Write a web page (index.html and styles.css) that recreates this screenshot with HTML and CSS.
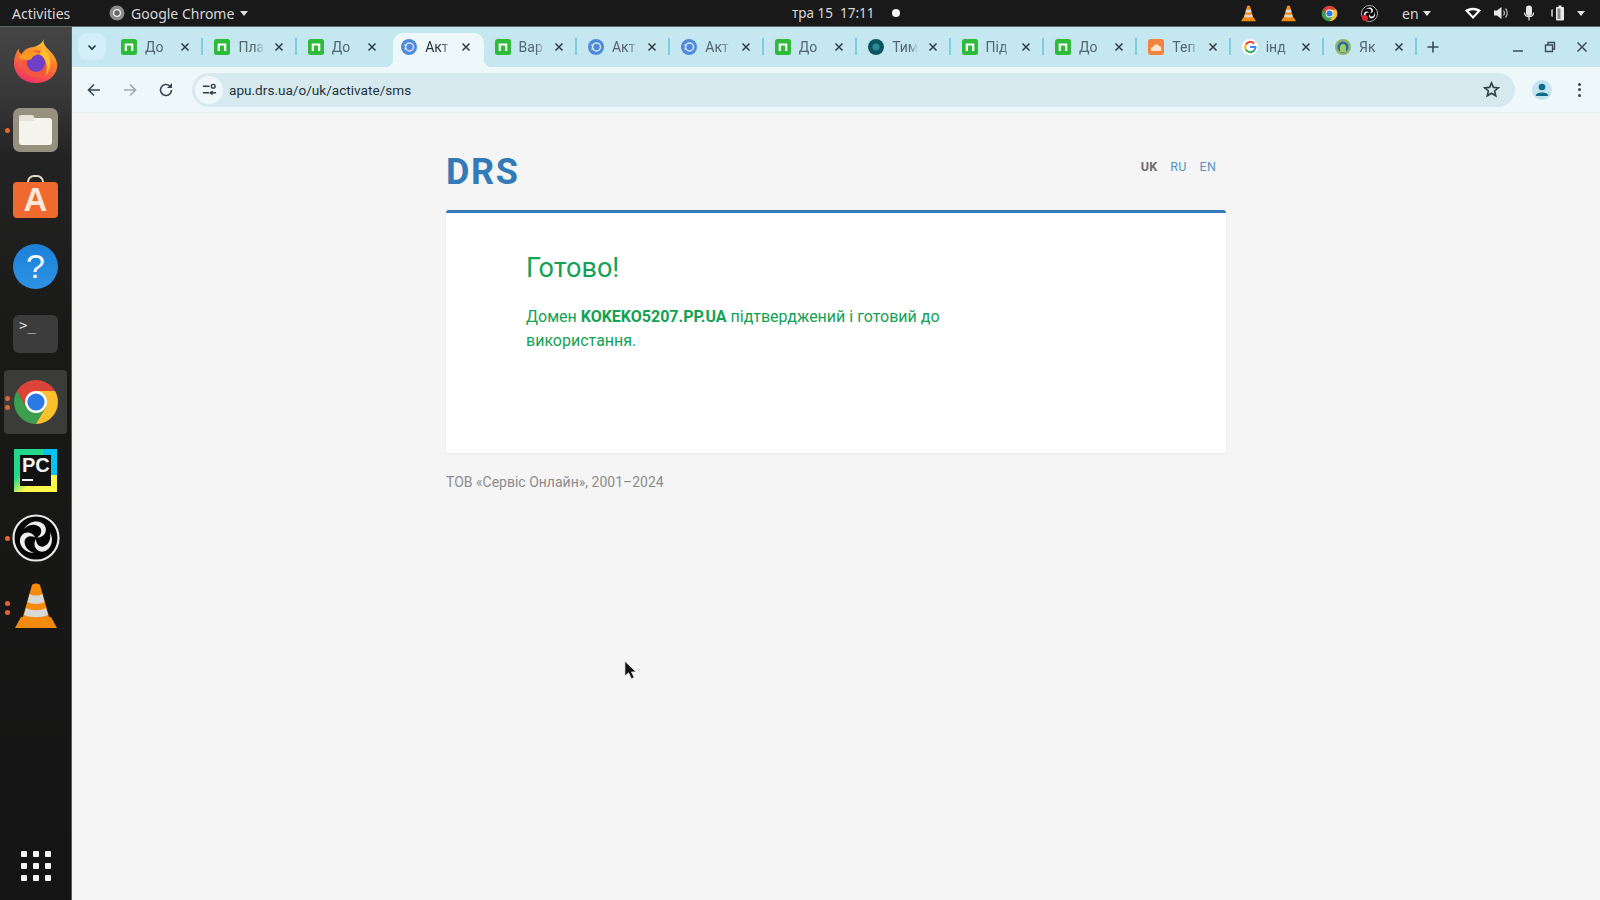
FILE: index.html
```html
<!DOCTYPE html>
<html lang="uk">
<head>
    <meta charset="UTF-8">
    <meta name="viewport" content="width=device-width, initial-scale=1.0">
    <title>DRS - Готово</title>
    <link rel="stylesheet" href="styles.css">
</head>
<body>
    <svg class="defs" width="0" height="0" aria-hidden="true">
        <symbol id="chrome" viewBox="0 0 48 48">
            <path fill="#db4437" d="M43 13H24L14.5 29.5 5 13A22 22 0 0 1 43 13Z"/>
            <path fill="#3c9f4f" d="M5 13 14.5 29.5H33.5L24 46A22 22 0 0 1 5 13Z"/>
            <path fill="#fbc02d" d="M43 13H24L33.5 29.5 24 46A22 22 0 0 0 43 13Z"/>
            <circle cx="24" cy="24" r="11" fill="#fff"/>
            <circle cx="24" cy="24" r="8.6" fill="#2a79e4"/>
        </symbol>
        <symbol id="cone" viewBox="0 0 48 48">
            <path fill="#f08a12" d="M3 46 9 35H39L45 46Z"/>
            <path fill="#f58a0b" d="M20 3C22 1 26 1 28 3L38 38C32 42 16 42 10 38Z"/>
            <path fill="#d8d8d8" d="M17.5 12C21 14 27 14 30.5 12L32.5 20C28 22.5 20 22.5 15.5 20Z"/>
            <path fill="#d8d8d8" d="M14 26C20 29 28 29 34 26L36 33C29 36 19 36 12 33Z"/>
        </symbol>
        <symbol id="obs" viewBox="0 0 48 48">
            <circle cx="24" cy="24" r="22.5" fill="#050505" stroke="#e8e8e8" stroke-width="2.2"/>
            <path fill="#eee" d="M12 15C17 6 29 5 33 12 36 18 31 24 25 23.500 29 21 30.500 17 28 13.500 24 9.500 17 10 12 15Z"/>
            <path fill="#eee" transform="rotate(120 24 24)" d="M12 15C17 6 29 5 33 12 36 18 31 24 25 23.500 29 21 30.500 17 28 13.500 24 9.500 17 10 12 15Z"/>
            <path fill="#eee" transform="rotate(240 24 24)" d="M12 15C17 6 29 5 33 12 36 18 31 24 25 23.500 29 21 30.500 17 28 13.500 24 9.500 17 10 12 15Z"/>
        </symbol>
        <symbol id="nfav" viewBox="0 0 16 16">
            <rect width="16" height="16" rx="2.5" fill="#2fbb3a"/>
            <path fill="none" stroke="#fff" stroke-width="2.2" d="M4.8 12V5.500H11.200V12"/>
        </symbol>
        <symbol id="sdfav" viewBox="0 0 16 16">
            <circle cx="8" cy="8" r="8" fill="#4f8ad9"/>
            <circle cx="8.5" cy="8" r="4" fill="none" stroke="#d7e6fa" stroke-width="1.5"/>
            <path fill="none" stroke="#d7e6fa" stroke-width="1.2" d="M3 6H6M3 10H6"/>
        </symbol>
        <symbol id="close" viewBox="0 0 10 10">
            <path fill="none" stroke="currentColor" stroke-width="1.5" d="M1.500 1.500 8.500 8.500M8.500 1.500 1.500 8.500"/>
        </symbol>
    </svg>

    <div class="desktop">
        <div class="topbar">
            <span class="activities">Activities</span>
            <span class="app-menu">
                <svg class="app-icon" viewBox="0 0 16 16"><circle cx="8" cy="8" r="7.500" fill="#8b8b8b"/><circle cx="8" cy="8" r="4" fill="#efefef"/><circle cx="8" cy="8" r="2.700" fill="#666"/></svg>
                Google Chrome
                <i class="caret"></i>
            </span>
            <span class="clock">тра 15&nbsp; 17:11</span>
            <i class="rec-dot"></i>
            <div class="tray">
                <svg class="tray-vlc"><use href="#cone"/></svg>
                <svg class="tray-vlc second"><use href="#cone"/></svg>
                <svg class="tray-chrome"><use href="#chrome"/></svg>
                <span class="tray-obs"><svg><use href="#obs"/></svg><i></i></span>
                <span class="lang">en <i class="caret"></i></span>
                <svg class="tray-sys wifi" viewBox="0 0 16 16"><path fill="#fff" d="M0 5.500C4 1.800 12 1.800 16 5.500L8 14Z"/><path fill="#1a1a1a" d="M3.600 6.300C6 4.800 10 4.800 12.400 6.300L8 11Z"/></svg>
                <svg class="tray-sys vol" viewBox="0 0 16 16"><path fill="#e8e8e8" d="M1 5.500H4L8.500 2V14L4 10.500H1Z"/><path fill="none" stroke="#bbb" stroke-width="1.200" d="M10.500 5.500C11.700 7 11.700 9 10.500 10.500M12.500 3.500C14.800 6 14.800 10 12.500 12.500"/></svg>
                <svg class="tray-sys mic" viewBox="0 0 16 16"><rect x="5" y="0.500" width="6" height="10.500" rx="3" fill="#e8e8e8"/><path fill="none" stroke="#e8e8e8" stroke-width="1.200" d="M3.500 7.500C3.500 13 12.500 13 12.500 7.500M8 12V15.500"/></svg>
                <svg class="tray-sys batt" viewBox="0 0 20 16"><path fill="#aaa" d="M2 5 4 4V12L2 11Z"/><rect x="7" y="2" width="8" height="13.500" rx="1" fill="#e8e8e8"/><rect x="9.500" y="0.500" width="3" height="2" fill="#e8e8e8"/><rect x="8.500" y="3.500" width="3" height="10.500" fill="#888"/></svg>
                <i class="caret end"></i>
            </div>
        </div>

        <div class="workspace">
            <aside class="dock">
                <div class="dock-item">
                    <svg class="dock-icon fox-icon" viewBox="0 0 48 48">
                        <defs>
                            <linearGradient id="fox" x1="0.700" y1="0" x2="0.300" y2="1"><stop offset="0" stop-color="#ffd13a"/><stop offset="0.450" stop-color="#ff7a2a"/><stop offset="1" stop-color="#ee2f68"/></linearGradient>
                        </defs>
                        <path fill="url(#fox)" d="M32 1C31 6 34 9 38 13 44 19 47 25 46 31 44 41 35 47 24 47 11 47 1 38 1 26 1 20 3 15 6 11 6 14 7 16 9 17 11 13 14 11 18 10 24 9 30 7 32 1Z"/>
                        <circle cx="24" cy="27" r="14" fill="#f4563f"/>
                        <path fill="#ffbe2e" d="M31 11C40 17 42 30 34 39 37 30 35 21 27 17Z"/>
                        <circle cx="24" cy="26" r="9.500" fill="#6f3fc6"/>
                        <path fill="#ff9a1f" d="M6 20C10 13 21 12 30 17 24 17 20 19 19.500 22 15 24 10 23 6 20Z"/>
                    </svg>
                </div>
                <div class="dock-item running">
                    <div class="files-icon"><i></i></div>
                </div>
                <div class="dock-item">
                    <div class="store-icon"><i></i><span>A</span></div>
                </div>
                <div class="dock-item">
                    <div class="help-icon">?</div>
                </div>
                <div class="dock-item">
                    <div class="term-icon">&gt;_</div>
                </div>
                <div class="dock-item active running double">
                    <svg class="dock-icon wide"><use href="#chrome"/></svg>
                </div>
                <div class="dock-item">
                    <div class="pc-icon"><div class="pc-inner"><span>PC</span><i></i></div></div>
                </div>
                <div class="dock-item running">
                    <svg class="dock-icon wide"><use href="#obs"/></svg>
                </div>
                <div class="dock-item running double">
                    <svg class="dock-icon wide"><use href="#cone"/></svg>
                </div>
                <div class="launcher">
                    <i></i><i></i><i></i><i></i><i></i><i></i><i></i><i></i><i></i>
                </div>
            </aside>

            <div class="browser">
                <div class="tabstrip">
                    <div class="tab-search">
                        <svg viewBox="0 0 10 10"><path fill="none" stroke="#20343c" stroke-width="1.600" d="M1.500 3.500 5 7 8.500 3.500"/></svg>
                    </div>
                    <div class="tab sep"><svg class="fav"><use href="#nfav"/></svg><span class="tab-title">До</span><svg class="tab-x"><use href="#close"/></svg></div>
                    <div class="tab sep"><svg class="fav"><use href="#nfav"/></svg><span class="tab-title">Пла</span><svg class="tab-x"><use href="#close"/></svg></div>
                    <div class="tab"><svg class="fav"><use href="#nfav"/></svg><span class="tab-title">До</span><svg class="tab-x"><use href="#close"/></svg></div>
                    <div class="tab current"><svg class="fav"><use href="#sdfav"/></svg><span class="tab-title">Акт</span><svg class="tab-x"><use href="#close"/></svg></div>
                    <div class="tab sep"><svg class="fav"><use href="#nfav"/></svg><span class="tab-title">Вар</span><svg class="tab-x"><use href="#close"/></svg></div>
                    <div class="tab sep"><svg class="fav"><use href="#sdfav"/></svg><span class="tab-title">Акт</span><svg class="tab-x"><use href="#close"/></svg></div>
                    <div class="tab sep"><svg class="fav"><use href="#sdfav"/></svg><span class="tab-title">Акт</span><svg class="tab-x"><use href="#close"/></svg></div>
                    <div class="tab sep"><svg class="fav"><use href="#nfav"/></svg><span class="tab-title">До</span><svg class="tab-x"><use href="#close"/></svg></div>
                    <div class="tab sep"><svg class="fav" viewBox="0 0 16 16"><circle cx="8" cy="8" r="8" fill="#0b5560"/><circle cx="8" cy="8" r="3.500" fill="#2a8a90"/></svg><span class="tab-title">Тим</span><svg class="tab-x"><use href="#close"/></svg></div>
                    <div class="tab sep"><svg class="fav"><use href="#nfav"/></svg><span class="tab-title">Під</span><svg class="tab-x"><use href="#close"/></svg></div>
                    <div class="tab sep"><svg class="fav"><use href="#nfav"/></svg><span class="tab-title">До</span><svg class="tab-x"><use href="#close"/></svg></div>
                    <div class="tab sep"><svg class="fav" viewBox="0 0 16 16"><rect width="16" height="16" rx="3" fill="#f4813c"/><path fill="#ffe3cf" d="M3 12C2 9 4 8 5 8 6 5 10 4 11 7 13 7 14 10 13 12Z"/></svg><span class="tab-title">Теп</span><svg class="tab-x"><use href="#close"/></svg></div>
                    <div class="tab sep"><svg class="fav" viewBox="0 0 16 16"><circle cx="8" cy="8" r="8" fill="#fff"/><path fill="none" stroke="#ea4335" stroke-width="2" d="M12.200 4.500A5.400 5.400 0 0 0 3.700 5.500"/><path fill="none" stroke="#fbbc05" stroke-width="2" d="M3.700 5.500A5.400 5.400 0 0 0 3.700 10.500"/><path fill="none" stroke="#34a853" stroke-width="2" d="M3.700 10.500A5.400 5.400 0 0 0 12.200 11.500"/><path fill="none" stroke="#4285f4" stroke-width="2" d="M12.200 11.500C13.200 10.500 13.400 9.500 13.400 8H8"/></svg><span class="tab-title">інд</span><svg class="tab-x"><use href="#close"/></svg></div>
                    <div class="tab sep"><svg class="fav" viewBox="0 0 16 16"><circle cx="8" cy="8" r="8" fill="#8fb36a"/><circle cx="8" cy="8" r="5.500" fill="#2c6aa0"/><path fill="#9ccc6a" d="M5 13V8C5 4 11 4 11 8V13Z"/></svg><span class="tab-title">Як</span><svg class="tab-x"><use href="#close"/></svg></div>
                    <svg class="new-tab" viewBox="0 0 12 12"><path fill="none" stroke="#3a4c55" stroke-width="1.600" d="M6 .5V11.500M.5 6H11.500"/></svg>
                    <div class="win-controls">
                        <svg viewBox="0 0 12 12"><path fill="none" stroke="#3a4c55" stroke-width="1.500" d="M1 10H11"/></svg>
                        <svg viewBox="0 0 12 12"><path fill="none" stroke="#3a4c55" stroke-width="1.400" d="M1.500 4H8.500V10.500H1.500ZM4 4V1.500H10.500V8H8.500"/></svg>
                        <svg viewBox="0 0 12 12"><path fill="none" stroke="#3a4c55" stroke-width="1.500" d="M1.500 1.500 10.500 10.500M10.500 1.500 1.500 10.500"/></svg>
                    </div>
                </div>

                <div class="toolbar">
                    <svg class="tb-btn" viewBox="0 0 16 16"><path fill="none" stroke="#37474f" stroke-width="1.600" d="M14 8H2.500M8 2.500 2.500 8 8 13.500"/></svg>
                    <svg class="tb-btn" viewBox="0 0 16 16"><path fill="none" stroke="#9aa7ad" stroke-width="1.600" d="M2 8H13.500M8 2.500 13.500 8 8 13.500"/></svg>
                    <svg class="tb-btn" viewBox="0 0 16 16"><path fill="none" stroke="#37474f" stroke-width="1.600" d="M13.500 8A5.500 5.500 0 1 1 11.800 4"/><path fill="#37474f" d="M14 1V6H9Z"/></svg>
                    <div class="omnibox">
                        <span class="site-info">
                            <svg viewBox="0 0 16 16"><path fill="none" stroke="#2f3f47" stroke-width="1.500" d="M1 4.500H8M12.500 11.500H15M1 11.500H8"/><circle cx="12" cy="4.500" r="2" fill="none" stroke="#2f3f47" stroke-width="1.500"/><circle cx="10.500" cy="11.500" r="2" fill="#2f3f47"/></svg>
                        </span>
                        <span class="url">apu.drs.ua/o/uk/activate/sms</span>
                        <svg class="star" viewBox="0 0 16 16"><path fill="none" stroke="#2f3f47" stroke-width="1.500" d="M8 1.800 9.800 6 14.400 6.400 10.900 9.400 12 13.900 8 11.500 4 13.900 5.100 9.400 1.600 6.400 6.200 6Z"/></svg>
                    </div>
                    <span class="avatar">
                        <svg viewBox="0 0 20 20"><circle cx="10" cy="7" r="3.300" fill="#0d6e8c"/><path fill="#0d6e8c" d="M3.800 15.500C4 11.500 16 11.500 16.200 15.500V16H3.800Z"/></svg>
                    </span>
                    <span class="kebab"><i></i><i></i><i></i></span>
                </div>

                <div class="page">
                    <div class="site">
                        <header class="site-head">
                            <a class="logo">DRS</a>
                            <nav class="langs">
                                <a class="on">UK</a>
                                <a>RU</a>
                                <a>EN</a>
                            </nav>
                        </header>
                        <main class="card">
                            <h1>Готово!</h1>
                            <p>Домен <b>KOKEKO5207.PP.UA</b> підтверджений і готовий до використання.</p>
                        </main>
                        <footer class="site-foot">ТОВ «Сервіс Онлайн», 2001–2024</footer>
                    </div>
                </div>
            </div>
        </div>
    </div>

    <svg class="cursor" viewBox="0 0 14 22"><path fill="#111" stroke="#eee" stroke-width="0.800" d="M1 1V17L5 13.500 8 20 11 18.500 8 12.500H13Z"/></svg>
</body>
</html>
```

FILE: styles.css
```css
:root {
    --strip: #c4e7f0;
    --toolbar: #eef8fb;
    --omni: #d6e9ef;
    --page: #f5f5f5;
    --blue: #337ab7;
    --green: #13a155;
}

* {
    box-sizing: border-box;
    margin: 0;
    padding: 0;
}

html, body {
    height: 100%;
    overflow: hidden;
    background: var(--page);
    font-family: Roboto, "Noto Sans", sans-serif;
}

.defs {
    position: absolute;
}

.desktop {
    height: 900px;
    display: flex;
    flex-direction: column;
}

/* gnome top bar */
.topbar {
    height: 27px;
    flex-shrink: 0;
    display: flex;
    align-items: center;
    background: #191919;
    border-bottom: 1px solid #5d6a6c;
    color: #d8d8d8;
    font-family: "Noto Sans", sans-serif;
    font-size: 14px;
    padding-left: 12px;
}

.activities {
    width: 97px;
}

.app-menu {
    display: flex;
    align-items: center;
    gap: 6px;
    width: 683px;
}

.app-icon {
    width: 16px;
    height: 16px;
}

.caret {
    display: inline-block;
    width: 0;
    height: 0;
    border-left: 4.5px solid transparent;
    border-right: 4.5px solid transparent;
    border-top: 5px solid #e0e0e0;
}

.clock {
    width: 100px;
    font-size: 13.5px;
}

.rec-dot {
    width: 8px;
    height: 8px;
    border-radius: 50%;
    background: #f4f4f4;
}

.tray {
    margin-left: auto;
    display: flex;
    align-items: center;
    padding-right: 15px;
}

.tray svg {
    display: block;
}

.tray-vlc {
    width: 17px;
    height: 17px;
    margin-right: 23px;
}

.tray-vlc.second {
    margin-right: 24px;
}

.tray-chrome {
    width: 17px;
    height: 17px;
    margin-right: 23px;
}

.tray-obs {
    position: relative;
    margin-right: 24px;
}

.tray-obs svg {
    width: 17px;
    height: 17px;
}

.tray-obs i {
    position: absolute;
    left: 1px;
    bottom: 1px;
    width: 6px;
    height: 6px;
    border-radius: 50%;
    background: #e02020;
}

.lang {
    display: flex;
    align-items: center;
    gap: 4px;
    width: 63px;
}

.tray-sys {
    width: 16px;
    height: 16px;
    margin-right: 12px;
}

.tray-sys.batt {
    width: 20px;
    margin-right: 8px;
}

/* dock */
.workspace {
    flex: 1;
    display: flex;
    min-height: 0;
}

.dock {
    width: 72px;
    flex-shrink: 0;
    display: flex;
    flex-direction: column;
    padding-top: 1px;
    background: linear-gradient(#454545 0, #3a3a3a 60px, #232323 130px, #191a18 300px, #141414 100%);
    border-right: 1px solid #5c5c5c;
}

.dock-item {
    height: 68px;
    flex-shrink: 0;
    display: flex;
    align-items: center;
    justify-content: center;
    position: relative;
}

.dock-item.active {
    height: 64px;
    margin: 2px 4px;
    background: #3b3b39;
    border-radius: 4px;
}

.dock-item.running::before {
    content: "";
    position: absolute;
    left: 5px;
    top: 32px;
    width: 5px;
    height: 5px;
    border-radius: 50%;
    background: #e9642a;
}

.dock-item.double::before {
    top: 29px;
    box-shadow: 0 9px 0 #e9642a;
}

.dock-item.active::before {
    left: 1px;
    top: 26px;
}

.dock-icon {
    width: 46px;
    height: 46px;
}

.fox-icon {
    margin-top: -2px;
}

.dock-icon.wide {
    width: 48px;
    height: 48px;
}

.files-icon {
    width: 45px;
    height: 44px;
    border-radius: 7px;
    background: #96917f;
    padding: 10px 6px 7px;
    position: relative;
}

.files-icon::before {
    content: "";
    position: absolute;
    left: 6px;
    top: 7px;
    width: 15px;
    height: 6px;
    border-radius: 2px 2px 0 0;
    background: #e6e2d8;
}

.files-icon i {
    display: block;
    height: 100%;
    border-radius: 3px;
    background: #f7f4ee;
}

.store-icon {
    width: 45px;
    height: 36px;
    margin-top: 3px;
    border-radius: 4px;
    background: #f0692e;
    color: #ffe9dc;
    font: bold 33px/36px "Liberation Sans", sans-serif;
    text-align: center;
    position: relative;
}

.store-icon i {
    position: absolute;
    left: 14px;
    top: -7px;
    width: 17px;
    height: 7px;
    border: 2px solid #e8d8c8;
    border-bottom: 0;
    border-radius: 9px 9px 0 0;
}

.help-icon {
    width: 45px;
    height: 45px;
    border-radius: 50%;
    background: linear-gradient(#1b80d8, #2e93e4);
    color: #f4f8fc;
    font: 34px/45px "Liberation Sans", sans-serif;
    text-align: center;
}

.term-icon {
    width: 45px;
    height: 38px;
    border-radius: 6px;
    background: #3c3c3c;
    color: #ddd;
    font: 14px/20px "DejaVu Sans Mono", monospace;
    padding-left: 6px;
}

.pc-icon {
    width: 43px;
    height: 43px;
    padding: 6px;
    background: linear-gradient(135deg, #21d789 0 35%, #fcf84a 60% 100%);
    position: relative;
    overflow: hidden;
}

.pc-icon::after {
    content: "";
    position: absolute;
    right: 0;
    top: 0;
    width: 14px;
    height: 26px;
    background: #07c3f2;
}

.pc-inner {
    position: relative;
    z-index: 1;
    height: 100%;
    background: #111;
    color: #f2f2f2;
    font: bold 20px/21px "Liberation Sans", sans-serif;
    padding-left: 2px;
}

.pc-inner span {
    display: block;
}

.pc-inner i {
    display: block;
    width: 11px;
    height: 2px;
    margin-top: 3px;
    background: #f2f2f2;
}

.launcher {
    margin-top: auto;
    height: 68px;
    display: grid;
    grid-template-columns: repeat(3, 6px);
    grid-auto-rows: 6px;
    gap: 6px;
    place-content: center;
}

.launcher i {
    background: #f4f4f4;
    border-radius: 1px;
}

/* chrome window */
.browser {
    flex: 1;
    min-width: 0;
    display: flex;
    flex-direction: column;
}

.tabstrip {
    height: 40px;
    flex-shrink: 0;
    display: flex;
    align-items: stretch;
    background: var(--strip);
    padding-left: 6px;
    color: #3c4c54;
}

.tab-search {
    width: 28px;
    height: 27px;
    margin-top: 6px;
    margin-right: 4px;
    border-radius: 9px;
    background: #d3f0f8;
    display: flex;
    align-items: center;
    justify-content: center;
}

.tab-search svg {
    width: 10px;
    height: 10px;
}

.tab {
    width: 93.4px;
    flex-shrink: 0;
    display: flex;
    align-items: center;
    padding: 0 13px 0 11px;
    position: relative;
    font-size: 14px;
}

.tab.sep::after {
    content: "";
    position: absolute;
    right: 0;
    top: 11px;
    height: 17px;
    width: 2px;
    background: #7fcbe0;
}

.tab.current {
    width: 90.4px;
    height: 34px;
    margin: 6px 0 0 3px;
    padding-left: 8px;
    padding-bottom: 6px;
    background: var(--toolbar);
    border-radius: 10px 10px 0 0;
}

/* little flares where the active tab meets the toolbar */
.tab.current::before,
.tab.current::after {
    content: "";
    position: absolute;
    bottom: 0;
    width: 8px;
    height: 8px;
}

.tab.current::before {
    left: -8px;
    background: radial-gradient(circle at 0 0, transparent 8px, var(--toolbar) 8.5px);
}

.tab.current::after {
    right: -8px;
    background: radial-gradient(circle at 100% 0, transparent 8px, var(--toolbar) 8.5px);
}

.fav {
    width: 16px;
    height: 16px;
    flex-shrink: 0;
    margin-right: 8px;
}

.tab-title {
    width: 26px;
    overflow: hidden;
    white-space: nowrap;
    color: #54666e;
    -webkit-mask-image: linear-gradient(90deg, #000 65%, transparent);
    mask-image: linear-gradient(90deg, #000 65%, transparent);
}

.current .tab-title {
    color: #26343a;
}

.tab-x {
    width: 10px;
    height: 10px;
    margin-left: auto;
    color: #2e3d44;
}

.new-tab {
    width: 12px;
    height: 12px;
    align-self: center;
    margin-left: 10px;
}

.win-controls {
    margin-left: auto;
    display: flex;
    align-items: center;
    gap: 20px;
    padding-right: 12px;
}

.win-controls svg {
    width: 12px;
    height: 12px;
}

.toolbar {
    height: 46px;
    flex-shrink: 0;
    display: flex;
    align-items: center;
    background: var(--toolbar);
    border-bottom: 1px solid #e4eef1;
    border-radius: 8px 8px 0 0;
    padding-left: 14px;
}

.tb-btn {
    width: 16px;
    height: 16px;
    margin-right: 20px;
}

.tb-btn:nth-of-type(3) {
    margin-right: 18px;
}

.omnibox {
    width: 1323px;
    height: 34px;
    border-radius: 17px;
    background: var(--omni);
    display: flex;
    align-items: center;
    color: #25343b;
    font-size: 13.6px;
}

.site-info {
    width: 28px;
    height: 28px;
    margin-left: 3px;
    border-radius: 50%;
    background: var(--toolbar);
    display: flex;
    align-items: center;
    justify-content: center;
}

.site-info svg {
    width: 15px;
    height: 15px;
}

.url {
    margin-left: 6px;
}

.star {
    width: 17px;
    height: 17px;
    margin-left: auto;
    margin-right: 15px;
}

.avatar {
    width: 20px;
    height: 20px;
    margin-left: 17px;
    border-radius: 50%;
    background: #c4e4ee;
    display: block;
}

.avatar svg {
    display: block;
}

.kebab {
    display: flex;
    flex-direction: column;
    gap: 2.5px;
    margin-left: 26px;
}

.kebab i {
    width: 3px;
    height: 3px;
    border-radius: 50%;
    background: #37474f;
}

/* the drs page itself */
.page {
    flex: 1;
    background: var(--page);
}

.site {
    width: 780px;
    margin: 0 auto;
}

.site-head {
    height: 97px;
    display: flex;
    justify-content: space-between;
    padding-top: 38px;
}

.logo {
    color: var(--blue);
    font-size: 36px;
    font-weight: 700;
    line-height: 42px;
    letter-spacing: 1.6px;
}

.langs {
    display: flex;
    gap: 13px;
    padding-top: 8px;
    padding-right: 10px;
    font-size: 12.5px;
    letter-spacing: 0.2px;
    line-height: 16px;
    color: #5b93c4;
}

.langs .on {
    color: #6d6d6d;
    font-weight: 700;
}

.card {
    height: 243px;
    background: #fff;
    border-top: 3px solid var(--blue);
    border-radius: 3px;
    box-shadow: 0 1px 3px rgba(0, 0, 0, 0.05);
    padding: 35px 80px 0;
    color: var(--green);
}

.card h1 {
    font-size: 27px;
    font-weight: 400;
    line-height: 40px;
    margin-bottom: 17px;
}

.card p {
    width: 440px;
    font-size: 16px;
    line-height: 24px;
}

.card b {
    font-weight: 700;
}

.site-foot {
    margin-top: 20px;
    color: #8c8c8c;
    font-size: 14px;
    line-height: 18px;
}

.cursor {
    position: absolute;
    left: 624px;
    top: 660px;
    width: 13px;
    height: 21px;
}
```
